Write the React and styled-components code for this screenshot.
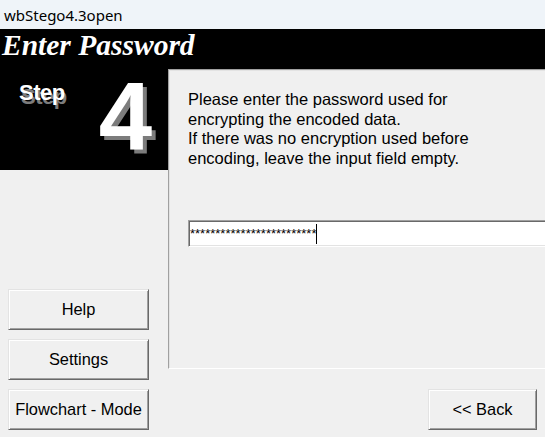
import React from "react";
import styled, { createGlobalStyle } from "styled-components";

const GlobalStyle = createGlobalStyle`
  html, body {
    margin: 0;
    padding: 0;
    background: #f0f0f0;
    overflow: hidden;
  }
  * {
    box-sizing: border-box;
  }
`;

const Page = styled.div`
  width: 545px;
  height: 437px;
  overflow: hidden;
  display: flex;
  flex-direction: column;
  background: #f0f0f0;
  font-family: "Liberation Sans", Arial, sans-serif;
  color: #000;
`;

const TitleBar = styled.div`
  height: 29px;
  flex: none;
  background: #eff4f9;
  padding-left: 4px;
  display: flex;
  align-items: center;
  font-family: "Noto Sans", "Open Sans", sans-serif;
  font-size: 15px;
  color: #000;
`;

const Header = styled.div`
  height: 40px;
  flex: none;
  background: #000;
  color: #fff;
  padding-left: 2px;
  font-family: "Liberation Serif", "Times New Roman", serif;
  font-weight: bold;
  font-style: italic;
  font-size: 29.5px;
  line-height: 32px;
  white-space: nowrap;
`;

const Body = styled.div`
  flex: 1;
  display: grid;
  grid-template-columns: 168px 1fr;
  grid-template-rows: 320px auto;
`;

const Side = styled.div`
  display: flex;
  flex-direction: column;
  justify-content: space-between;
  padding-bottom: 9px;
`;

const StepBox = styled.div`
  height: 101px;
  background: #000;
  color: #fff;
  display: flex;
  align-items: flex-start;
  padding-left: 19px;
`;

const StepWord = styled.span`
  margin-top: 13px;
  font-size: 22px;
  line-height: 22px;
  font-weight: bold;
  letter-spacing: -0.5px;
  text-shadow: 2px 4px 0 #7c7c7c;
`;

const StepNumber = styled.span`
  margin-left: 34px;
  font-size: 96px;
  line-height: 96px;
  font-weight: bold;
  text-shadow: 4px 4px 0 #7c7c7c;
`;

const SideButtons = styled.div`
  display: flex;
  flex-direction: column;
  gap: 9px;
  padding-left: 8px;
`;

const Button = styled.button`
  width: ${(p) => p.$width}px;
  height: 41px;
  padding: 0;
  background: #f0f0f0;
  font-family: "Liberation Sans", Arial, sans-serif;
  font-size: 16.4px;
  color: #000;
  border-style: solid;
  border-width: 1px;
  border-color: #e3e3e3 #696969 #696969 #e3e3e3;
  box-shadow: inset 1px 1px 0 #fff, inset -1px -1px 0 #a0a0a0;
  white-space: nowrap;
`;

const Panel = styled.div`
  height: 300px;
  border-style: solid;
  border-width: 1px 0 1px 1px;
  border-color: #a0a0a0 #fff #fff #a0a0a0;
  box-shadow: inset 1px 1px 0 #e3e3e3;
  padding: 20px 0 0 19px;
`;

const Message = styled.p`
  margin: 0;
  font-size: 16.5px;
  line-height: 19.5px;
  white-space: pre-line;
`;

const PasswordField = styled.div`
  margin-top: 52px;
  margin-right: -12px;
  height: 27px;
  display: flex;
  align-items: center;
  padding-left: 1px;
  background: #fff;
  border-style: solid;
  border-width: 1px;
  border-color: #a0a0a0 #fff #fff #a0a0a0;
  box-shadow: inset 1px 1px 0 #696969, inset -1px -1px 0 #e3e3e3;
`;

const Mask = styled.span`
  font-size: 13px;
  line-height: 13px;
  white-space: nowrap;
`;

const Caret = styled.span`
  width: 1px;
  height: 20px;
  background: #000;
`;

const Footer = styled.div`
  grid-column: 1 / -1;
  display: flex;
  justify-content: space-between;
  align-items: flex-start;
  padding: 0 8px;
`;

const message =
  "Please enter the password used for\nencrypting the encoded data.\nIf there was no encryption used before\nencoding, leave the input field empty.";

export default function App() {
  return (
    <>
      <GlobalStyle />
      <Page>
        <TitleBar>wbStego4.3open</TitleBar>
        <Header>Enter Password</Header>
        <Body>
          <Side>
            <StepBox>
              <StepWord>Step</StepWord>
              <StepNumber>4</StepNumber>
            </StepBox>
            <SideButtons>
              <Button $width={141}>Help</Button>
              <Button $width={141}>Settings</Button>
            </SideButtons>
          </Side>
          <Panel>
            <Message>{message}</Message>
            <PasswordField>
              <Mask>{"*".repeat(25)}</Mask>
              <Caret />
            </PasswordField>
          </Panel>
          <Footer>
            <Button $width={141}>Flowchart - Mode</Button>
            <Button $width={109}>&lt;&lt; Back</Button>
          </Footer>
        </Body>
      </Page>
    </>
  );
}
